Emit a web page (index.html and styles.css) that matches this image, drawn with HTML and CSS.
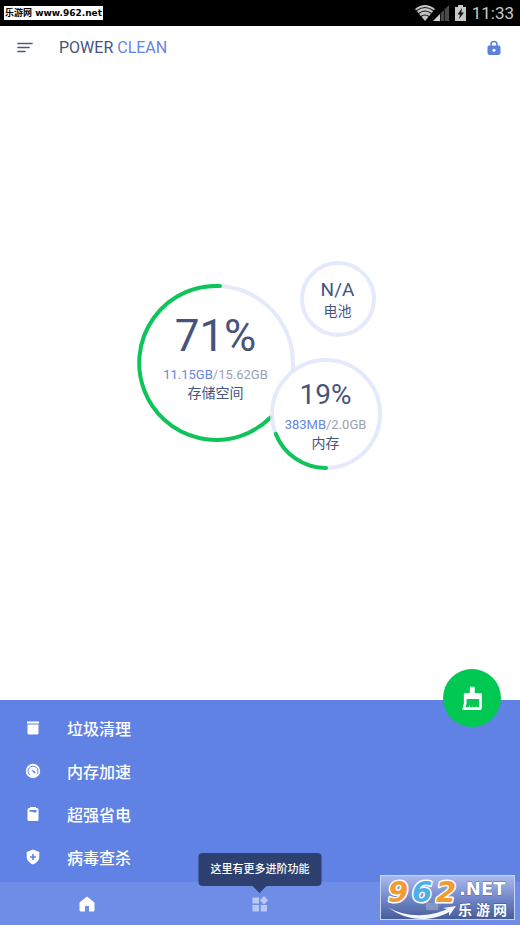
FILE: index.html
```html
<!DOCTYPE html>
<html lang="zh-CN">
<head>
<meta charset="utf-8">
<meta name="viewport" content="width=device-width, initial-scale=1">
<title>Power Clean</title>
<link rel="stylesheet" href="styles.css">
</head>
<body>
<div class="status">
  <span class="site-tag">乐游网 www.962.net</span>
  <div class="status-icons">
    <svg width="34" height="18" viewBox="0 0 34 18" aria-hidden="true">
      <path d="M0 5Q10 -3 20 5L10 17Z" fill="#c4c4c4"/>
      <path d="M1 7Q10 0 19 7M3.500 9.500Q10 4.500 16.500 9.500M6 12.500Q10 9.500 14 12.500" fill="none" stroke="#111" stroke-width="1.200"/>
      <path d="M18 17L34 1V17Z" fill="#4a4a4a"/>
      <path d="M18 17L25 10V17Z" fill="#d0d0d0"/>
      <path d="M25.500 8V17M29.500 4V17" stroke="#151515"/>
    </svg>
    <svg width="11" height="18" viewBox="0 0 11 18" aria-hidden="true">
      <path d="M3 1H8V3H11V17H0V3H3Z" fill="#c8c8c8"/>
      <path d="M7 4L2.500 10.500H5L4 15L9 8.500H6.300Z" fill="#151515"/>
    </svg>
    <time class="clock">11:33</time>
  </div>
</div>
<header class="header">
  <button class="icon-button" type="button" aria-label="菜单">
    <svg width="16" height="12" viewBox="0 0 16 12"><path d="M1 1.500H15M1 5.500H12M1 9.500H8" stroke="#4c587c" stroke-width="1.600" stroke-linecap="round"/></svg>
  </button>
  <h1 class="title">POWER <span class="accent">CLEAN</span></h1>
  <button class="icon-button" type="button" aria-label="应用锁">
    <svg width="14" height="16" viewBox="0 0 14 16"><path d="M4 7V4.500a3 3 0 0 1 6 0V7" fill="none" stroke="#5c80e0" stroke-width="1.600"/><path d="M2 5.500H12Q13.500 5.500 13.500 7V12.500Q13.500 15 11 15H3Q.500 15 .500 12.500V7Q.500 5.500 2 5.500Z" fill="#5c80e0"/><circle cx="7" cy="10.300" r="1.500" fill="#fff"/></svg>
  </button>
</header>
<main class="main">
  <div class="gauges">
    <section class="gauge storage">
      <svg viewBox="0 0 158 158" aria-hidden="true">
        <path class="track" d="M79 2A77 77 0 0 1 155.500 88"/>
        <path class="value" d="M83 2A77 77 0 1 0 133.500 133.500"/>
      </svg>
      <div class="reading">
        <strong class="percent">71%</strong>
        <span class="amount"><span class="accent">11.15GB</span>/15.62GB</span>
        <span class="label">存储空间</span>
      </div>
    </section>
    <div class="side">
      <section class="gauge battery">
        <svg viewBox="0 0 76 76" aria-hidden="true"><circle class="track" cx="38" cy="38" r="36"/></svg>
        <div class="reading">
          <strong class="percent">N/A</strong>
          <span class="label">电池</span>
        </div>
      </section>
      <section class="gauge memory">
        <svg viewBox="0 0 112 112" aria-hidden="true">
          <circle class="track" cx="56" cy="56" r="54"/>
          <path class="value" d="M56 110A54 54 0 0 1 5.800 75.900"/>
        </svg>
        <div class="reading">
          <strong class="percent">19%</strong>
          <span class="amount"><span class="accent">383MB</span>/2.0GB</span>
          <span class="label">内存</span>
        </div>
      </section>
    </div>
  </div>
</main>
<section class="actions">
  <button class="clean" type="button" aria-label="清理">
    <svg width="24" height="26" viewBox="0 0 22 24"><path d="M9.500 2H13V8H19.500V21.500Q19.500 22.500 18.500 22.500H2.500L4 17V8H9.500Z" fill="#fff" stroke="#fff" stroke-linejoin="round"/><path d="M6 13H17.500V20.500H15.500V18.500L15 20.500H12V18.500L11.500 20.500H9V18.500L8 20.500H5L6 17Z" fill="#00c853"/></svg>
  </button>
  <a class="action" href="#junk">
    <svg class="action-icon" viewBox="0 0 16 16" aria-hidden="true"><path d="M2 1.500H14V3.500H2ZM2.500 4.500H13.500V13Q13.500 14.500 12 14.500H4Q2.500 14.500 2.500 13Z" fill="#fff"/></svg>
    垃圾清理</a>
  <a class="action" href="#boost">
    <svg class="action-icon" viewBox="0 0 16 16" aria-hidden="true"><circle cx="8" cy="8" r="7.200" fill="#fff"/><path d="M4.800 12A5 5 0 1 1 12 11.200" fill="none" stroke="#5f82e4"/><path d="M7 7L10.300 9L9.300 10.300Z" fill="#5f82e4" stroke="#5f82e4" stroke-width=".600"/></svg>
    内存加速</a>
  <a class="action" href="#power">
    <svg class="action-icon" viewBox="0 0 16 16" aria-hidden="true"><path d="M5 1H11V2H12Q13.500 2 13.500 4V13.500Q13.500 15 12 15H4Q2.500 15 2.500 13.500V4Q2.500 2 4 2H5Z" fill="#fff"/><path d="M4.500 4H11.500V6Q9.500 7 8 6T4.500 6Z" fill="#5f82e4"/></svg>
    超强省电</a>
  <a class="action" href="#virus">
    <svg class="action-icon" viewBox="0 0 16 16" aria-hidden="true"><path d="M8 .500L14.300 3V7.500C14.300 11.500 11.500 14 8 15.500C4.500 14 1.700 11.500 1.700 7.500V3Z" fill="#fff"/><path d="M8 5V11M5 8H11" stroke="#5f82e4" stroke-width="1.600"/></svg>
    病毒查杀</a>
</section>
<nav class="nav">
  <a class="tab current" href="#home" aria-label="首页">
    <svg width="16" height="16" viewBox="0 0 16 16"><path d="M8 .500L15.500 6.500V14Q15.500 15.500 14 15.500H10V10H6V15.500H2Q.500 15.500 .500 14V6.500Z"/></svg>
  </a>
  <a class="tab" href="#tools" aria-label="工具">
    <svg width="16" height="16" viewBox="0 0 16 16"><path d="M.500 1.500H7V7.500H.500ZM.500 9H7V15.500H.500ZM8.800 9H15V15.500H8.800ZM12 0L16 4.200L12 8.400L8 4.200Z"/></svg>
    <span class="tip">这里有更多进阶功能</span>
  </a>
  <a class="tab" href="#more" aria-label="更多">
    <svg width="16" height="16" viewBox="0 0 16 16"><path d="M3 1H13V3H15V15H1V3H3ZM5 8V10H11V8Z" fill-rule="evenodd"/></svg>
  </a>
</nav>
<svg class="watermark" width="135" height="45" viewBox="0 0 135 45" role="img" aria-label="962.NET 乐游网">
  <defs><linearGradient id="shade" x2="0" y2="1"><stop offset="0" stop-color="#b4c2ef"/><stop offset=".5" stop-color="#7589c9"/><stop offset="1" stop-color="#415690"/></linearGradient></defs>
  <rect x=".500" y=".500" width="134" height="44" fill="url(#shade)" fill-opacity=".9" stroke="#c7d2f4"/>
  <path d="M46 28H58V35H46Z" fill="#b5bfd9" opacity=".4"/>
  <g class="mark-number"><text x="8" y="27" fill="#f49a32">9</text><text x="32" y="27" fill="#4eaee8">6</text><text x="56" y="27" fill="#f49a32">2</text></g>
  <path d="M8 32C25 43 51 42 67 34L63 33L76 31L69 41L69 37C50 48 25 46 8 32Z" fill="#f4f6fb"/>
  <text class="mark-domain" x="79" y="20">.NET</text>
  <text class="mark-name" x="78 96 113" y="40">乐游网</text>
</svg>
</body>
</html>
```
FILE: styles.css
```css
* { box-sizing: border-box; }

body {
  position: relative;
  display: flex;
  flex-direction: column;
  min-height: 100vh;
  margin: 0;
  background: #fff;
  color: #46537d;
  font-family: Roboto, "Noto Sans CJK SC", sans-serif;
}

button {
  padding: 0;
  border: 0;
  background: none;
}

a { text-decoration: none; }
svg { display: block; }
.accent { color: #6486e2; }

.status {
  display: flex;
  align-items: center;
  justify-content: space-between;
  height: 26px;
  padding: 0 6px 0 4px;
  background: #000;
}

.site-tag {
  padding: 0 1px;
  background: #fff;
  color: #000;
  font: bold 9px/14px "DejaVu Sans", "Noto Sans CJK SC", sans-serif;
}

.status-icons {
  display: flex;
  align-items: center;
  gap: 6px;
}

.clock {
  color: #c8c8c8;
  font-size: 17px;
  line-height: 20px;
}

.header {
  display: flex;
  align-items: center;
  height: 44px;
  padding: 0 18px 0 17px;
}

.icon-button {
  display: grid;
  place-items: center;
  width: 16px;
  height: 32px;
}

.title {
  flex: 1;
  margin: 0 0 0 26px;
  font-size: 16px;
  font-weight: 400;
  line-height: 20px;
}

.main {
  display: flex;
  flex: 1;
  align-items: center;
  justify-content: center;
  padding: 0 2px 40px 0;
}

.gauges {
  display: flex;
  align-items: flex-start;
}

.gauge {
  display: grid;
}

.gauge > * { grid-area: 1 / 1; }
.gauge svg { width: 100%; }

.track,
.value {
  fill: none;
  stroke-width: 4;
}

.track { stroke: #dfe6fa; stroke-opacity: .85; }
.value { stroke: #0fc45a; stroke-linecap: round; }

.reading {
  display: flex;
  flex-direction: column;
  align-items: center;
}

.percent { font-weight: 400; }

.amount {
  color: #9aa1b5;
  font-size: 13px;
  line-height: 18px;
}

.label {
  font-size: 14px;
  line-height: 18px;
}

.storage {
  width: 158px;
  margin-top: 23px;
}

.storage .reading { padding-top: 28px; }

.storage .percent {
  margin-bottom: 6px;
  font-size: 44px;
  line-height: 48px;
}

.side {
  width: 112px;
  margin-left: -25px;
}

.battery {
  width: 76px;
  margin: 0 0 21px 30px;
}

.battery .reading { padding-top: 17px; }

.battery .percent {
  font-size: 19px;
  line-height: 24px;
}

.memory .reading { padding-top: 21px; }

.memory .percent {
  margin-bottom: 5px;
  font-size: 28px;
  line-height: 32px;
}

.actions {
  position: relative;
  padding: 6px 0 4px;
  background: #5f82e4;
}

.action {
  display: flex;
  align-items: center;
  gap: 26px;
  height: 43px;
  padding-left: 25px;
  color: #fff;
  font-size: 16px;
  font-weight: 500;
}

.action-icon {
  width: 16px;
  height: 16px;
}

.clean {
  position: absolute;
  top: -31px;
  right: 19px;
  display: grid;
  place-items: center;
  width: 58px;
  height: 58px;
  border-radius: 50%;
  background: #00c853;
}

.nav {
  display: grid;
  grid-template-columns: repeat(3, 1fr);
  height: 43px;
  background: #6e8de7;
}

.tab {
  position: relative;
  display: grid;
  place-items: center;
  fill: #b9c8f4;
}

.current { fill: #fff; }

.tip {
  position: absolute;
  bottom: 39px;
  left: 50%;
  padding: 0 12px;
  border-radius: 4px;
  background: #2d4070;
  color: #fff;
  font-size: 11px;
  font-weight: 500;
  line-height: 33px;
  white-space: nowrap;
  transform: translateX(-50%);
}

.tip::after {
  position: absolute;
  top: 100%;
  left: 50%;
  margin-left: -7px;
  border: 7px solid transparent;
  border-top-color: #2d4070;
  border-bottom: 0;
  content: "";
}

.watermark {
  position: absolute;
  right: 5px;
  bottom: 5px;
}

.mark-number,
.mark-domain,
.mark-name {
  paint-order: stroke;
  stroke-linejoin: round;
}

.mark-number {
  font: italic bold 29px "DejaVu Sans", sans-serif;
  stroke: #fff;
  stroke-width: 3px;
}

.mark-domain {
  fill: #fff;
  stroke: #5b6b9b;
  stroke-width: 1px;
  font: bold 18px "DejaVu Sans", sans-serif;
}

.mark-name {
  fill: #fff;
  stroke: #42558d;
  stroke-width: 1px;
  font: bold 14px "Noto Sans CJK SC", sans-serif;
}
```
